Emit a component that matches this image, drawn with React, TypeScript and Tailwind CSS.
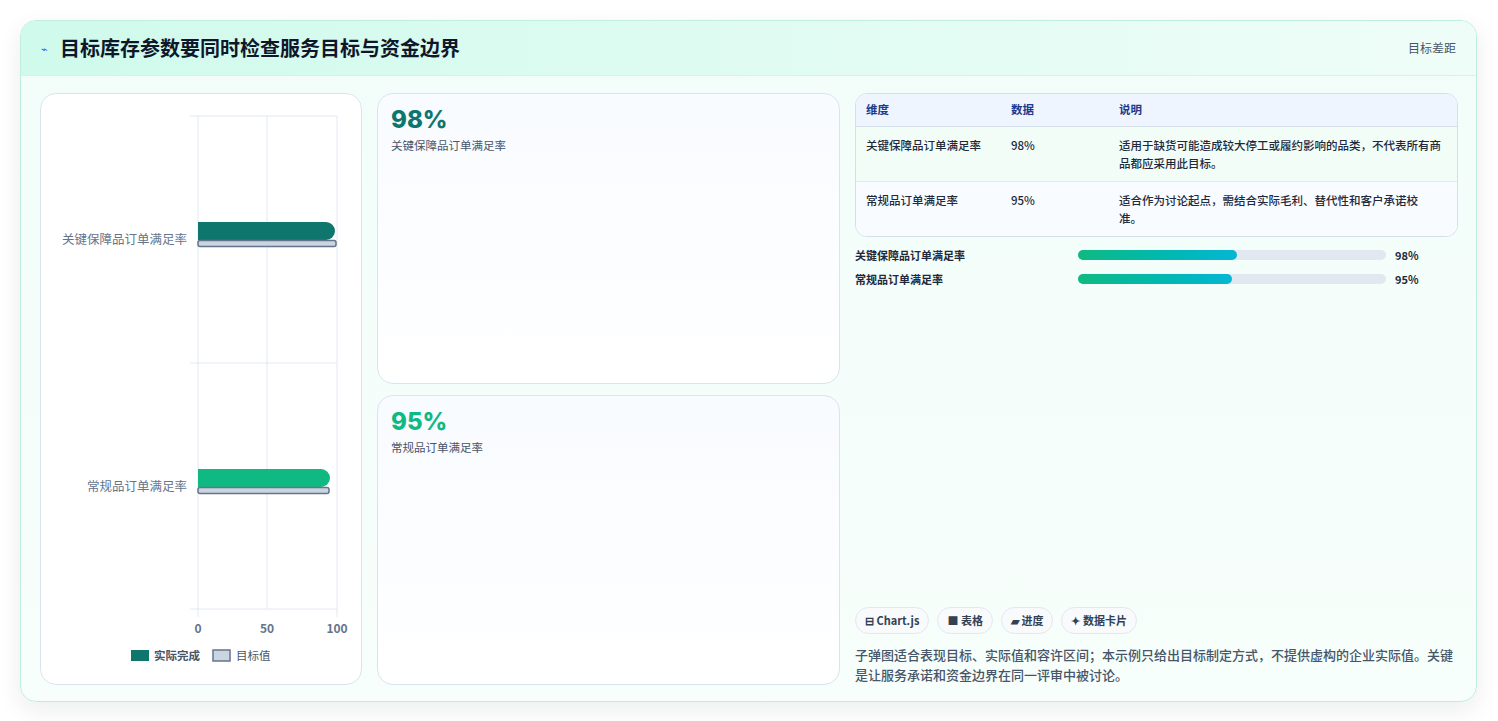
export default function App() {
  const f = { fontFamily: '"Noto Sans CJK SC", "Noto Sans", sans-serif' };
  return (
    <div className="w-[1498px] h-[721px] bg-white p-5 pb-[19px]" style={f}>
      <div className="h-[682px] w-[1457px] rounded-2xl border border-[#bfeee0] bg-gradient-to-b from-[#f2fdf9] to-[#f7fefb] shadow-[0_8px_24px_rgba(15,23,42,0.08)] overflow-hidden flex flex-col">
        <div className="h-[55px] shrink-0 flex items-center justify-between px-5 bg-gradient-to-r from-[#cffaec] to-[#effdf8] border-b border-[#d5f3ea]">
          <div className="flex items-center gap-3">
            <span className="text-[11px] text-[#2563eb]">⌁</span>
            <span className="text-[20px] font-bold text-[#0f172a]">目标库存参数要同时检查服务目标与资金边界</span>
          </div>
          <span className="text-[12px] text-[#475569]">目标差距</span>
        </div>
        <div className="flex-1 grid grid-cols-[322px_463px_603px] gap-[15px] px-[19px] pt-[17px] pb-[18px]">
          <div className="rounded-2xl border border-[#dbe4ee] bg-white relative">
            <svg width="322" height="590" viewBox="0 0 322 590" className="block">
              <g stroke="#e2e8f0" strokeWidth="1">
                <line x1="157" y1="22" x2="157" y2="523" />
                <line x1="226" y1="22" x2="226" y2="515" />
                <line x1="296" y1="22" x2="296" y2="523" />
                <line x1="149" y1="22" x2="296" y2="22" />
                <line x1="149" y1="269" x2="296" y2="269" />
                <line x1="149" y1="515" x2="296" y2="515" />
              </g>
              <path d="M157 128 H285 a9 9 0 0 1 9 9 a9 9 0 0 1 -9 9 H157 Z" fill="#0f766e" />
              <rect x="157" y="146.5" width="138" height="6" rx="2" fill="#cbd5e1" stroke="#64748b" strokeWidth="1.5" />
              <path d="M157 375 H280 a9 9 0 0 1 9 9 a9 9 0 0 1 -9 9 H157 Z" fill="#10b981" />
              <rect x="157" y="393.5" width="131" height="6" rx="2" fill="#cbd5e1" stroke="#64748b" strokeWidth="1.5" />
              <g fill="#64748b" fontSize="12.5" textAnchor="end">
                <text x="146" y="150">关键保障品订单满足率</text>
                <text x="146" y="397">常规品订单满足率</text>
              </g>
              <g fill="#64748b" fontSize="12" fontWeight="bold" textAnchor="middle">
                <text x="157" y="539">0</text>
                <text x="226" y="539">50</text>
                <text x="296" y="539">100</text>
              </g>
              <rect x="90" y="556" width="18" height="11" fill="#0f766e" />
              <text x="113" y="566" fontSize="11.5" fill="#475569" fontWeight="bold">实际完成</text>
              <rect x="172" y="556" width="17" height="11" fill="#cbd5e1" stroke="#64748b" strokeWidth="1.5" />
              <text x="195" y="566" fontSize="11.5" fill="#475569">目标值</text>
            </svg>
          </div>
          <div className="flex flex-col gap-[11px]">
            <div className="flex-1 rounded-2xl border border-[#dbe4ee] bg-gradient-to-b from-[#f8fbff] to-white px-[13px] pt-[10px]">
              <div className="text-[24px] font-extrabold text-[#0f766e] leading-[32px]" style={{ fontFamily: 'Inter, sans-serif' }}>98%</div>
              <div className="text-[11.5px] text-[#475569] mt-[1px]">关键保障品订单满足率</div>
            </div>
            <div className="flex-1 rounded-2xl border border-[#dbe4ee] bg-gradient-to-b from-[#f8fbff] to-white px-[13px] pt-[10px]">
              <div className="text-[24px] font-extrabold text-[#10b981] leading-[32px]" style={{ fontFamily: 'Inter, sans-serif' }}>95%</div>
              <div className="text-[11.5px] text-[#475569] mt-[1px]">常规品订单满足率</div>
            </div>
          </div>
          <div className="flex flex-col">
            <div className="rounded-xl border border-[#d5dfea] overflow-hidden bg-white text-[11.5px]">
              <div className="grid grid-cols-[145px_108px_1fr] h-[33px] items-center px-[10px] bg-[#eef5ff] border-b border-[#d5dfea] font-bold text-[#1e3a8a]">
                <span>维度</span><span>数据</span><span>说明</span>
              </div>
              <div className="grid grid-cols-[145px_108px_325px] px-[10px] py-[9px] bg-[#f2fdf8] border-b border-[#e2e8f0] text-[#1e293b] font-medium leading-[18px]">
                <span>关键保障品订单满足率</span><span>98%</span><span>适用于缺货可能造成较大停工或履约影响的品类，不代表所有商品都应采用此目标。</span>
              </div>
              <div className="grid grid-cols-[145px_108px_305px] px-[10px] py-[9px] bg-[#f8fbff] text-[#1e293b] font-medium leading-[18px]">
                <span>常规品订单满足率</span><span>95%</span><span>适合作为讨论起点，需结合实际毛利、替代性和客户承诺校准。</span>
              </div>
            </div>
            <div className="mt-[12px] flex flex-col gap-[12px] text-[11px] font-semibold text-[#1e293b]">
              {[["关键保障品订单满足率", 159, "98%"], ["常规品订单满足率", 154, "95%"]].map(([l, w, p]) => (
                <div key={l as string} className="flex items-center h-[12px]">
                  <span className="w-[223px]">{l}</span>
                  <div className="w-[308px] h-[10px] rounded-full bg-[#e2e8f0]">
                    <div className="h-full rounded-full bg-gradient-to-r from-[#10b981] to-[#06b6d4]" style={{ width: w as number }} />
                  </div>
                  <span className="ml-[9px] font-bold">{p}</span>
                </div>
              ))}
            </div>
            <div className="flex-1" />
            <div className="flex gap-[8px] text-[11px] font-semibold text-[#334155]">
              {["⊟ Chart.js", "■ 表格", "▰ 进度", "✦ 数据卡片"].map((c) => (
                <span key={c} className="h-[27px] px-[9px] flex items-center rounded-full border border-[#e2e8f0] bg-[#f8fafc]">{c}</span>
              ))}
            </div>
            <p className="mt-[11px] text-[13px] leading-[20px] font-medium text-[#475569]">
              子弹图适合表现目标、实际值和容许区间；本示例只给出目标制定方式，不提供虚构的企业实际值。关键是让服务承诺和资金边界在同一评审中被讨论。
            </p>
          </div>
        </div>
      </div>
    </div>
  );
}
